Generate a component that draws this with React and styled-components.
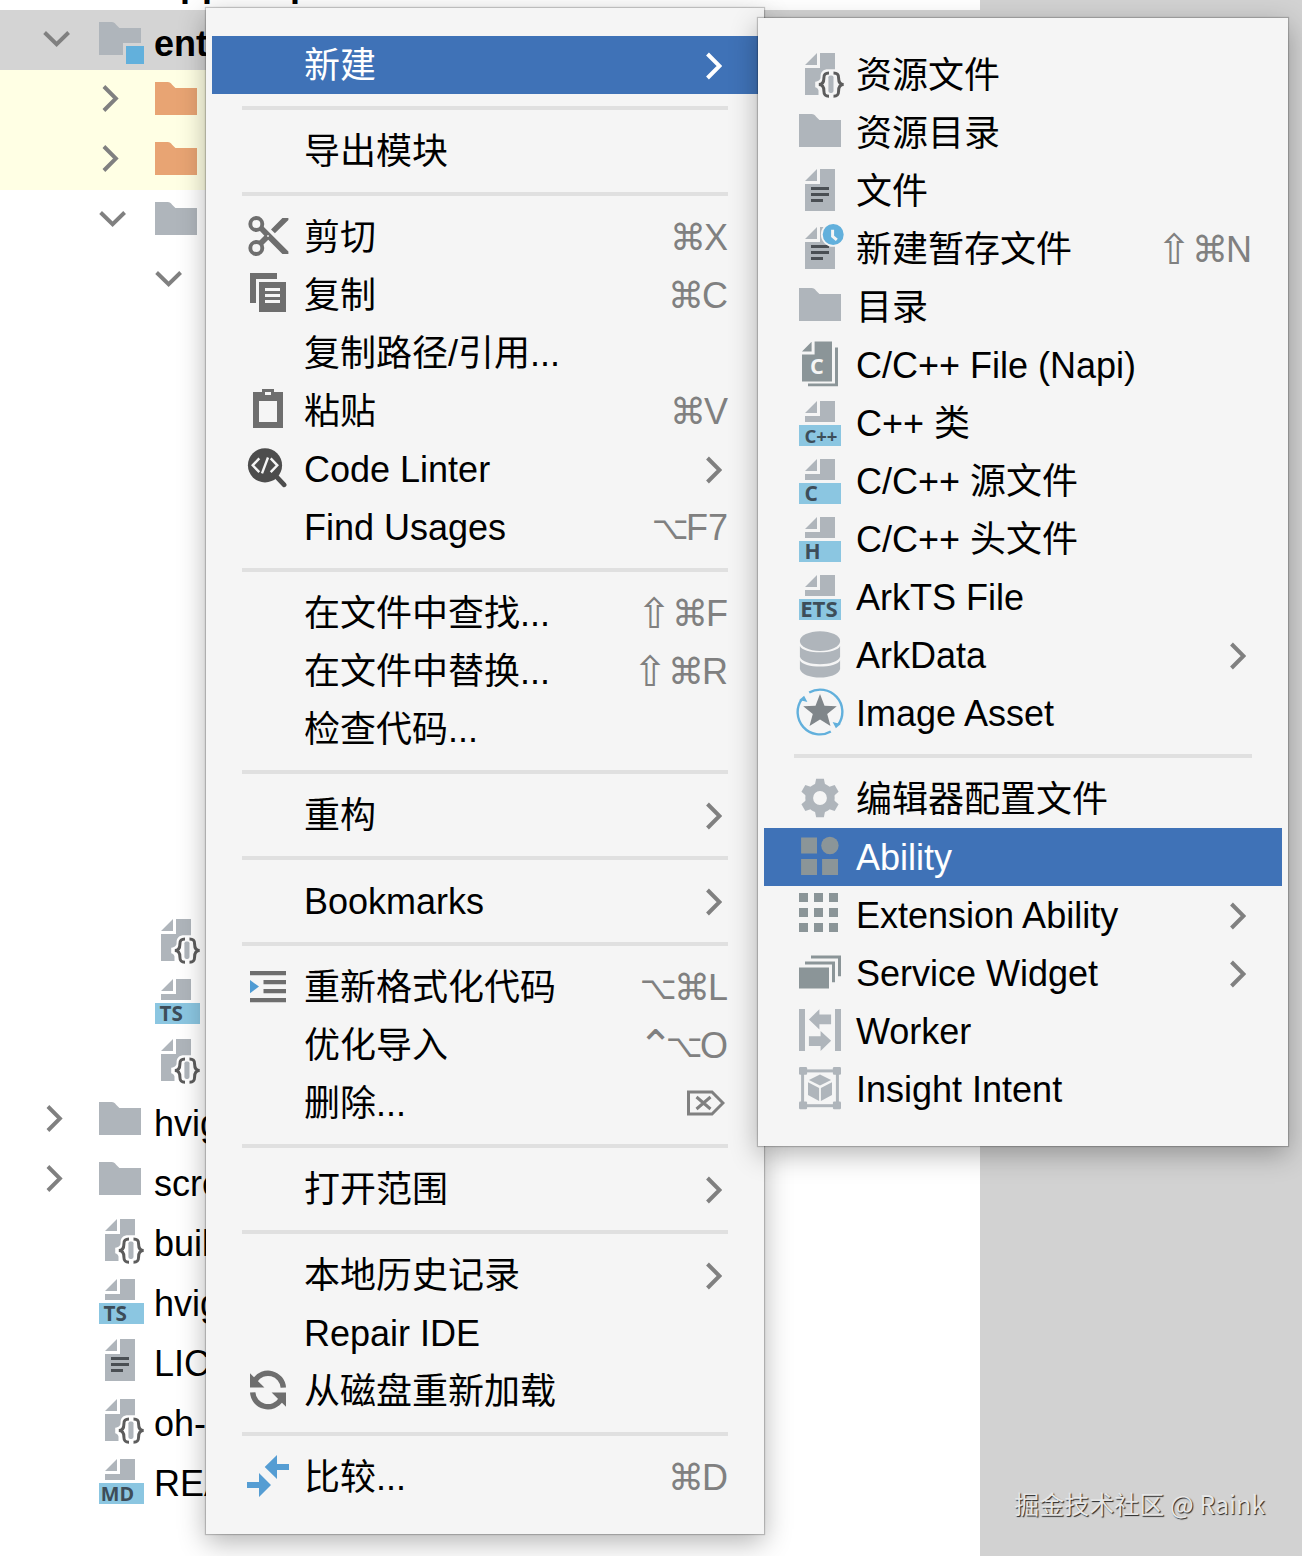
import React from 'react'
import styled, {createGlobalStyle} from 'styled-components'

const GlobalStyle = createGlobalStyle`
* {
  box-sizing: border-box;
}
body {
  margin: 0;
  background-color: white;
  color: black;
  font-family: "Liberation Sans", "Noto Sans CJK SC", sans-serif;
  font-size: 36px;
}
`

const Window = styled.div`
position: relative;
display: flex;
min-height: 100vh;
overflow: hidden;
`
const ProjectTree = styled.div`
flex: 1;
min-width: 0;
background-color: white;
/* the list is scrolled a little, so the first row is cut */
margin-top: -50px;
`
const TreeRow = styled.div`
display: flex;
align-items: center;
height: 60px;
padding-left: ${props => 32 + props.$level * 56}px;
background-color: ${props => props.$fill || 'transparent'};
`
const HiddenRows = styled.div`
height: 600px;
`
const Twisty = styled.div`
flex: none;
display: flex;
width: 48px;
height: 48px;
margin-right: 16px;
`
const TreeLabel = styled.span`
padding: 8px 0 0 10px;
line-height: 42px;
white-space: nowrap;
font-weight: ${props => props.$bold ? 'bold' : 'normal'};
`
const EditorPane = styled.div`
flex: none;
display: flex;
align-items: flex-end;
justify-content: flex-end;
width: 322px;
padding: 0 37px 34px 0;
background-color: #d2d2d2;
`
const Watermark = styled.span`
color: #e6e6e6;
font-family: "Noto Sans CJK SC", sans-serif;
font-size: 25px;
line-height: 38px;
white-space: nowrap;
text-shadow: 1px 1px 1px #222;
`
const Menu = styled.div`
position: absolute;
top: ${props => props.$top};
left: ${props => props.$left};
min-width: ${props => props.$minWidth};
padding: 28px 6px;
background-color: #f5f5f5;
box-shadow: 0 0 1px 1px rgba(0, 0, 0, 0.2), 0 8px 26px rgba(0, 0, 0, 0.3);
`
const MenuItem = styled.button`
display: flex;
align-items: center;
width: 100%;
height: 58px;
padding: 0 30px 0 32px;
border: none;
background-color: ${props => props.$active ? '#3f72b7' : 'transparent'};
color: ${props => props.$active ? 'white' : 'black'};
font: inherit;
line-height: 54px;
text-align: left;
white-space: nowrap;
`
const MenuIcon = styled.span`
flex: none;
display: flex;
width: 48px;
height: 48px;
margin: 0 12px 2px 0;
`
const MenuLabel = styled.span`
flex: 1;
padding-top: 2px;
`
const Shortcut = styled.span`
display: flex;
align-items: center;
padding-top: 2px;
color: #808080;
`
const KeyGlyph = styled.span`
width: ${props => props.$width};
font-family: "DejaVu Sans", sans-serif;
font-size: ${props => props.$size};
text-align: center;
`
const Separator = styled.div`
height: 4px;
margin: 12px 30px;
background-color: #e0e0e0;
`
const Svg = styled.svg`
display: block;
flex: none;
width: 48px;
height: 48px;
`
const MenuArrow = styled.svg`
flex: none;
width: 16px;
height: 28px;
margin: 2px 6px 0 0;
stroke: ${props => props.$active ? 'white' : '#808080'};
`
const DeleteKey = styled.svg`
flex: none;
width: 38px;
height: 26px;
margin-right: 3px;
`

const GREY = '#afb5bb'
const DARK = '#8b9598'
const ACTION = '#6e6e6e'
const BLUE = '#62b0dc'

const Icon = ({children}) => <Svg viewBox="0 0 16 16" aria-hidden="true">{children}</Svg>

const Folder = ({color = GREY}) => (
    <Icon><path fill={color} d="M1 2h4.2c.7 0 1.1.3 1.5.9L7.8 4H15v9H1z" /></Icon>
)

const Module = () => (
    <Icon>
        <path fill={GREY} d="M1 2h4.2c.7 0 1.1.3 1.5.9L7.8 4H15v5H9v4H1z" />
        <path fill={BLUE} d="M10 10h6v6h-6z" />
    </Icon>
)

const TextFile = ({clock}) => (
    <Icon>
        <path fill={GREY} d="M7 1v4H3zM8 1h5v14H3V6h5z" />
        <path fill="#4a4f54" d="M5 7h6v1H5zM5 9h6v1H5zM5 11h4v1H5z" />
        {clock && <circle cx="12.4" cy="3.5" r="3.8" fill={BLUE} stroke="#f5f5f5" strokeWidth=".6" />}
        {clock && <path d="M12.2 1.9v2.2l1.4 1.2" fill="none" stroke="#f5f5f5" strokeWidth="1" />}
    </Icon>
)

const JsonFile = () => (
    <Icon>
        <path fill={GREY} d="M7 1v4H3zM8 1h5v5.4h-2.2C9 6.4 8.2 7.3 8.2 8.8c0 1-.3 1.4-1.8 1.8v1.8c.7.2 1 .6 1.1 1.1V15H3V6h5z" />
        <rect fill={GREY} x="10.8" y="8.5" width="1.7" height="5.8" rx=".6" />
        <g fill="none" stroke="#5c5c5c" strokeWidth="1">
            <path d="M11 7.7c-1.3 0-1.7.5-1.7 1.6 0 1.3-.3 2.2-1.7 2.2 1.4 0 1.7.9 1.7 2.2 0 1.2.4 1.7 1.7 1.7" />
            <path d="M12.5 7.7c1.3 0 1.7.5 1.7 1.6 0 1.3.3 2.2 1.7 2.2-1.4 0-1.7.9-1.7 2.2 0 1.2-.4 1.7-1.7 1.7" />
        </g>
    </Icon>
)

const BadgeFile = ({text, x = 2.8, size = 6.6, wide}) => (
    <Icon>
        <path fill={GREY} d="M7 1v4H3zM8 1h5v7H3V6h5z" />
        <rect fill="#8bc6e1" x="1" y="9" width={wide ? 15 : 14} height="7" />
        <text x={x} y="14.9" fill="#3d4d59" fontFamily="Open Sans, sans-serif" fontWeight="bold" fontSize={size}>{text}</text>
    </Icon>
)

const NapiFile = () => (
    <Icon>
        <path fill={DARK} d="M5.2.6v3.2H2zM6.2.5H12v13.3H2v-9h4.2zM13 2.5h1v12.9H4v-.9h9z" />
        <text x="4.7" y="11.3" fill="#f5f5f5" fontFamily="Open Sans, sans-serif" fontWeight="bold" fontSize="7.2">C</text>
    </Icon>
)

const Database = () => (
    <Icon>
        <g fill={GREY}>
            <ellipse cx="8" cy="3.7" rx="6.7" ry="3.3" />
            <path d="M1.3 5.3c1 2.8 12.4 2.8 13.4 0v3.6c-1 3.3-12.4 3.3-13.4 0z" />
            <path d="M1.3 10.1c1 2.8 12.4 2.8 13.4 0v2.9c-1 3.8-12.4 3.8-13.4 0z" />
        </g>
    </Icon>
)

const ImageAsset = () => (
    <Icon>
        <g fill="none" stroke={BLUE} strokeWidth=".8">
            <path d="M4.4 1.5A7.4 7.4 0 0 1 14.1 12.2" />
            <path d="M11.6 14.5A7.4 7.4 0 0 1 1.9 3.8" />
        </g>
        <path fill={BLUE} d="M1 4.1l1.7-1.5 1.1 2.1-1.3-.4zM15 11.9l-1.7 1.5-1.1-2.1 1.3.4z" />
        <path fill="#80868a" d="M8 2l1.5 3.9 4.1.2-3.2 2.6 1.1 4L8 10.5l-3.5 2.2 1.1-4-3.2-2.6 4.1-.2z" />
    </Icon>
)

const Gear = () => (
    <Icon>
        <circle cx="8" cy="8" r="3.6" fill="none" stroke={GREY} strokeWidth="2.6" />
        {[0, 60, 120, 180, 240, 300].map(a => (
            <path key={a} fill={GREY} transform={`rotate(${a} 8 8)`} d="M6.7 1.6h2.6l.5 2.6H6.2z" />
        ))}
    </Icon>
)

const Ability = () => (
    <Icon>
        <g fill={DARK}>
            <path d="M1.7 1.8H7v5.4H1.7zM1.7 9H7v5.3H1.7zM8.7 9H14v5.3H8.7z" />
            <circle cx="11.3" cy="4.5" r="2.9" />
        </g>
    </Icon>
)

const DotGrid = () => (
    <Icon>
        {[1, 6, 11].map(y => [1, 6, 11].map(x => (
            <rect key={x + '-' + y} fill={DARK} x={x} y={y} width="3" height="3" />
        )))}
    </Icon>
)

const Widget = () => (
    <Icon>
        <path fill={DARK} d="M1 6.5h10v7H1zM3 4.5h10v6.9h-1V5.5H3zM5 2.5h10v6.9h-1V3.5H5z" />
    </Icon>
)

const Worker = () => (
    <Icon>
        <path fill={GREY} d="M1 1h2v14H1zM13 1h2v14h-2zM4.3 4.5L7.8 1.1v1.7h3.9v3.3H7.8v1.7zM11.7 11.6L8.2 8.3v1.8H4.3v3.2h3.9v1.7z" />
    </Icon>
)

const Insight = () => (
    <Icon>
        <rect x="2.2" y="2.3" width="11.6" height="11.6" fill="none" stroke={GREY} strokeWidth="1" />
        <g fill={GREY}>
            <rect x="1" y="1" width="2.7" height="2.6" rx=".4" />
            <rect x="12.3" y="1" width="2.7" height="2.6" rx=".4" />
            <rect x="1" y="12.5" width="2.7" height="2.6" rx=".4" />
            <rect x="12.3" y="12.5" width="2.7" height="2.6" rx=".4" />
            <path d="M8 3.5l3.7 1.8L8 7.2 4.3 5.3zM4 6.1l3.7 1.9v4.3L4 10.3zM12 6.1L8.3 8v4.3l3.7-2z" />
        </g>
    </Icon>
)

const Cut = () => (
    <Icon>
        <g fill="none" stroke={ACTION} strokeWidth="1.3">
            <circle cx="4.1" cy="4" r="2" />
            <circle cx="4.1" cy="12" r="2" />
            <path d="M5.5 10.5L8 8" strokeWidth="1.9" />
        </g>
        <path fill={ACTION} d="M5 6l1.3-1.3L14.8 13.2v.8h-2L7.5 8.7zM9 5.8L12.8 2h2v.7L10.3 7.1z" />
        <circle cx="8" cy="8" r=".3" fill="#f5f5f5" />
    </Icon>
)

const Copy = () => (
    <Icon>
        <path fill={ACTION} fillRule="evenodd" d="M2 1h9v2H4v8H2zM5 4h9v10H5zM7 6v1h5V6zM7 8v1h5V8zM7 10v1h5v-1z" />
    </Icon>
)

const Paste = () => (
    <Icon>
        <path fill={ACTION} fillRule="evenodd" d="M3 2h3V1h4v1h3v12H3zM5 5v7h6V5zM7 2v1h2V2z" />
    </Icon>
)

const Linter = () => (
    <Icon>
        <circle cx="7" cy="7.1" r="5.7" fill="#4d4d4d" />
        <path d="M10.8 10.9l2.6 2.7" stroke="#4d4d4d" strokeWidth="1.6" strokeLinecap="round" />
        <path d="M5.1 4.8L2.9 7.1l2.2 2.3M8.9 4.8l2.2 2.3-2.2 2.3M8 4.5L6 9.8" fill="none" stroke="#f5f5f5" strokeWidth=".8" />
    </Icon>
)

const Reformat = () => (
    <Icon>
        <path fill={ACTION} d="M2 3h12v1.4H2zM6.5 6H14v1.4H6.5zM6.5 9H14v1.4H6.5zM2 12h12v1.4H2z" />
        <path fill="#4f9bd3" d="M2 6l3 2.2-3 2.2z" />
    </Icon>
)

const Reload = () => (
    <Icon>
        {[0, 180].map(a => (
            <g key={a} transform={`rotate(${a} 8 8)`}>
                <path d="M3.7 4.8A5.1 5.1 0 0 1 13.1 7.2" fill="none" stroke={ACTION} strokeWidth="1.8" />
                <path fill={ACTION} d="M2 2.4l4.8 4.8H2z" />
            </g>
        ))}
    </Icon>
)

const Compare = () => (
    <Icon>
        <path fill="#559dd3" d="M6.9 5L11 1v3h4v2h-4v3zM9 11L5 7v3H1v2h4v3z" />
    </Icon>
)

const TreeArrow = ({open}) => (
    <Icon>
        <path d={open ? 'M4.2 5.5l4 3.9 4-3.9' : 'M5.3 3.5l4 4-4 4'} fill="none" stroke="#808080" strokeWidth="1.3" />
    </Icon>
)

const treeRows = [
    {level: 0, open: true, icon: <Folder />, label: 'AppScope', bold: true},
    {level: 0, open: true, icon: <Module />, label: 'ent', bold: true, fill: '#d4d4d4'},
    {level: 1, open: false, icon: <Folder color="#e8a473" />, fill: '#ffffe4'},
    {level: 1, open: false, icon: <Folder color="#e8a473" />, fill: '#ffffe4'},
    {level: 1, open: true, icon: <Folder />},
    {level: 2, open: true},
    {gap: true},
    {level: 1, icon: <JsonFile />},
    {level: 1, icon: <BadgeFile text="TS" x={2.5} size={6.9} wide />},
    {level: 1, icon: <JsonFile />},
    {level: 0, open: false, icon: <Folder />, label: 'hvig'},
    {level: 0, open: false, icon: <Folder />, label: 'scre'},
    {level: 0, icon: <JsonFile />, label: 'buil'},
    {level: 0, icon: <BadgeFile text="TS" x={2.5} size={6.9} wide />, label: 'hvig'},
    {level: 0, icon: <TextFile />, label: 'LIC'},
    {level: 0, icon: <JsonFile />, label: 'oh-'},
    {level: 0, icon: <BadgeFile text="MD" x={1.6} wide />, label: 'REA'}
]

const contextMenu = [
    {label: '新建', arrow: true, active: true},
    null,
    {label: '导出模块'},
    null,
    {label: '剪切', icon: <Cut />, glyphs: '⌘', keys: 'X'},
    {label: '复制', icon: <Copy />, glyphs: '⌘', keys: 'C'},
    {label: '复制路径/引用...'},
    {label: '粘贴', icon: <Paste />, glyphs: '⌘', keys: 'V'},
    {label: 'Code Linter', icon: <Linter />, arrow: true},
    {label: 'Find Usages', glyphs: '⌥', keys: 'F7'},
    null,
    {label: '在文件中查找...', glyphs: '⇧⌘', keys: 'F'},
    {label: '在文件中替换...', glyphs: '⇧⌘', keys: 'R'},
    {label: '检查代码...'},
    null,
    {label: '重构', arrow: true},
    null,
    {label: 'Bookmarks', arrow: true},
    null,
    {label: '重新格式化代码', icon: <Reformat />, glyphs: '⌥⌘', keys: 'L'},
    {label: '优化导入', glyphs: '⌃⌥', keys: 'O'},
    {label: '删除...', deleteKey: true},
    null,
    {label: '打开范围', arrow: true},
    null,
    {label: '本地历史记录', arrow: true},
    {label: 'Repair IDE'},
    {label: '从磁盘重新加载', icon: <Reload />},
    null,
    {label: '比较...', icon: <Compare />, glyphs: '⌘', keys: 'D'}
]

const newMenu = [
    {label: '资源文件', icon: <JsonFile />},
    {label: '资源目录', icon: <Folder />},
    {label: '文件', icon: <TextFile />},
    {label: '新建暂存文件', icon: <TextFile clock />, glyphs: '⇧⌘', keys: 'N'},
    {label: '目录', icon: <Folder />},
    {label: 'C/C++ File (Napi)', icon: <NapiFile />},
    {label: 'C++ 类', icon: <BadgeFile text="C++" size={6.2} />},
    {label: 'C/C++ 源文件', icon: <BadgeFile text="C" size={7} />},
    {label: 'C/C++ 头文件', icon: <BadgeFile text="H" size={7} />},
    {label: 'ArkTS File', icon: <BadgeFile text="ETS" x={1.4} size={7.4} />},
    {label: 'ArkData', icon: <Database />, arrow: true},
    {label: 'Image Asset', icon: <ImageAsset />},
    null,
    {label: '编辑器配置文件', icon: <Gear />},
    {label: 'Ability', icon: <Ability />, active: true},
    {label: 'Extension Ability', icon: <DotGrid />, arrow: true},
    {label: 'Service Widget', icon: <Widget />, arrow: true},
    {label: 'Worker', icon: <Worker />},
    {label: 'Insight Intent', icon: <Insight />}
]

// the modifier signs differ a lot in size within the font
const glyphSizes = {
    '⌘': {size: '36px', width: '34px'},
    '⇧': {size: '42px', width: '36px'},
    '⌥': {size: '32px', width: '34px'},
    '⌃': {size: '42px', width: '28px'}
}

// null in the list draws a separator
const MenuItems = ({items}) => items.map((item, i) => {
    if(!item) return <Separator key={i} role="separator" />
    return (
        <MenuItem key={i} type="button" role="menuitem" $active={item.active}>
            <MenuIcon>{item.icon}</MenuIcon>
            <MenuLabel>{item.label}</MenuLabel>
            {item.glyphs && (
                <Shortcut>
                    {item.glyphs.split('').map(g => (
                        <KeyGlyph key={g} $size={glyphSizes[g].size} $width={glyphSizes[g].width}>{g}</KeyGlyph>
                    ))}
                    {item.keys}
                </Shortcut>
            )}
            {item.deleteKey && (
                <DeleteKey viewBox="0 0 38 26" role="img" aria-label="Delete">
                    <path d="M1.5 2H25l11 11-11 11H1.5zM9.5 7l14 12M23.5 7l-14 12" fill="none" stroke="#808080" strokeWidth="3" />
                </DeleteKey>
            )}
            {item.arrow && (
                <MenuArrow viewBox="0 0 16 28" $active={item.active} aria-hidden="true">
                    <path d="M1.5 2l12 12-12 12" fill="none" strokeWidth="4" />
                </MenuArrow>
            )}
        </MenuItem>
    )
})

const App = () => {
    return (
        <Window>
            <GlobalStyle />
            <ProjectTree role="tree">
                {treeRows.map((row, i) => {
                    if(row.gap) return <HiddenRows key={i} />
                    return (
                        <TreeRow key={i} role="treeitem" $level={row.level} $fill={row.fill}>
                            <Twisty>{row.open !== undefined && <TreeArrow open={row.open} />}</Twisty>
                            {row.icon}
                            {row.label && <TreeLabel $bold={row.bold}>{row.label}</TreeLabel>}
                        </TreeRow>
                    )
                })}
            </ProjectTree>
            <EditorPane>
                <Watermark>掘金技术社区 @ Raink</Watermark>
            </EditorPane>
            <Menu role="menu" $top="8px" $left="206px" $minWidth="558px">
                <MenuItems items={contextMenu} />
                <Menu role="menu" $top="10px" $left="calc(100% - 6px)" $minWidth="530px">
                    <MenuItems items={newMenu} />
                </Menu>
            </Menu>
        </Window>
    )
}
export default App;
